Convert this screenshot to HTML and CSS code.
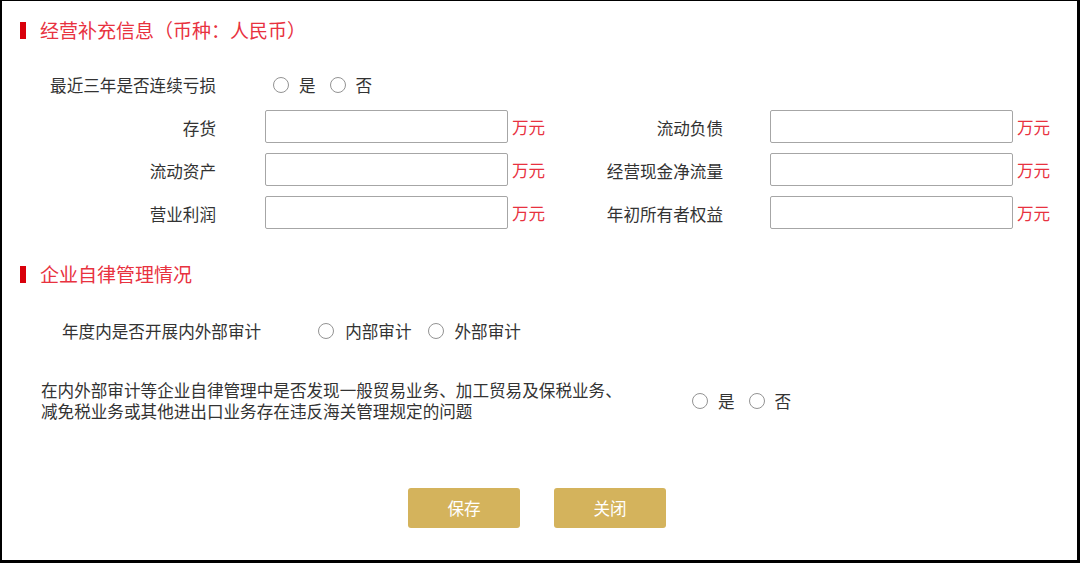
FILE: index.html
```html
<!DOCTYPE html>
<html lang="zh-CN">
<head>
<meta charset="utf-8">
<title>经营补充信息</title>
<link rel="stylesheet" href="styles.css">
</head>
<body>
<div class="page">
  <h2 class="sec-title"><span class="bar"></span>经营补充信息（币种：人民币）</h2>

  <div class="radio-row">
    <span class="lbl">最近三年是否连续亏损</span>
    <div class="radios">
      <label class="radio"><span class="circle"></span>是</label>
      <label class="radio"><span class="circle"></span>否</label>
    </div>
  </div>

  <div class="fin-grid">
    <span class="lbl">存货</span>
    <div class="field"><span class="input"></span><span class="unit">万元</span></div>
    <span class="lbl">流动负债</span>
    <div class="field field-r"><span class="input"></span><span class="unit">万元</span></div>

    <span class="lbl">流动资产</span>
    <div class="field"><span class="input"></span><span class="unit">万元</span></div>
    <span class="lbl">经营现金净流量</span>
    <div class="field field-r"><span class="input"></span><span class="unit">万元</span></div>

    <span class="lbl">营业利润</span>
    <div class="field"><span class="input"></span><span class="unit">万元</span></div>
    <span class="lbl">年初所有者权益</span>
    <div class="field field-r"><span class="input"></span><span class="unit">万元</span></div>
  </div>

  <h2 class="sec-title sec-title-2"><span class="bar"></span>企业自律管理情况</h2>

  <div class="audit-row">
    <span class="audit-lbl">年度内是否开展内外部审计</span>
    <div class="radios">
      <label class="radio"><span class="circle"></span>内部审计</label>
      <label class="radio"><span class="circle"></span>外部审计</label>
    </div>
  </div>

  <div class="question-row">
    <p class="question">在内外部审计等企业自律管理中是否发现一般贸易业务、加工贸易及保税业务、减免税业务或其他进出口业务存在违反海关管理规定的问题</p>
    <div class="radios">
      <label class="radio"><span class="circle"></span>是</label>
      <label class="radio"><span class="circle"></span>否</label>
    </div>
  </div>

  <div class="actions">
    <button class="btn">保存</button>
    <button class="btn">关闭</button>
  </div>
</div>
</body>
</html>
```

FILE: styles.css
```css
* { box-sizing: border-box; }

html, body {
  margin: 0;
  padding: 0;
  background: #fff;
}

body {
  font-family: "Noto Sans CJK SC", "Noto Sans", sans-serif;
  font-size: 16.6px;
  color: #333;
}

.page {
  width: 1080px;
  height: 563px;
  border-style: solid;
  border-color: #000;
  border-width: 1px 3px 3px 2px;
  overflow: hidden;
}

.sec-title {
  margin: 17px 0 0 0;
  padding-left: 18px;
  height: 24px;
  display: flex;
  align-items: center;
  font-size: 19px;
  font-weight: normal;
  color: #e8323f;
  line-height: 24px;
}

.sec-title .bar {
  width: 6px;
  height: 17px;
  background: #d9000b;
  margin-right: 14px;
}

.sec-title-2 {
  margin-top: 33px;
}

.lbl {
  display: block;
  text-align: right;
  line-height: 24px;
  white-space: nowrap;
}

.radio-row {
  margin-top: 31px;
  display: flex;
  align-items: center;
  height: 24px;
}

.radio-row .lbl {
  width: 214px;
}

.radio-row .radios {
  margin-left: 57px;
}

.radios {
  display: flex;
  align-items: center;
  gap: 14px;
}

.radio {
  display: flex;
  align-items: center;
  line-height: 24px;
  white-space: nowrap;
}

.circle {
  width: 16px;
  height: 16px;
  border: 1px solid #939393;
  border-radius: 50%;
  background: #fff;
  margin-right: 10px;
}

.fin-grid {
  margin-top: 13px;
  display: grid;
  grid-template-columns: 214px 334px 173px 1fr;
  grid-auto-rows: 33px;
  row-gap: 10px;
  align-items: center;
}

.fin-grid .lbl {
  padding-top: 2px;
}

.field {
  display: flex;
  align-items: center;
  padding-left: 49px;
  height: 33px;
}

.field-r {
  padding-left: 47px;
}

.input {
  width: 243px;
  height: 33px;
  border: 1px solid #a6a6a6;
  border-radius: 2px;
  background: #fff;
}

.unit {
  margin-left: 4px;
  color: #e8323f;
  line-height: 24px;
}

.audit-row {
  margin-top: 33px;
  display: flex;
  align-items: center;
  height: 24px;
  padding-left: 60px;
}

.audit-lbl {
  line-height: 24px;
  white-space: nowrap;
}

.audit-row .radios {
  margin-left: 57px;
  gap: 16px;
}

.audit-row .circle {
  margin-right: 11px;
}

.question-row {
  margin-top: 37px;
  display: flex;
  align-items: center;
  padding-left: 39px;
}

.question {
  margin: 0;
  width: 592px;
  line-height: 21px;
}

.question-row .radios {
  margin-left: 59px;
}

.actions {
  margin-top: 66px;
  display: flex;
  justify-content: center;
  gap: 34px;
  padding-right: 5px;
}

.btn {
  width: 112px;
  height: 40px;
  border: none;
  border-radius: 3px;
  background: #d4b35c;
  color: #fff;
  font-family: "Noto Sans CJK SC", "Noto Sans", sans-serif;
  font-size: 16.6px;
  padding: 0;
  cursor: pointer;
}
```
